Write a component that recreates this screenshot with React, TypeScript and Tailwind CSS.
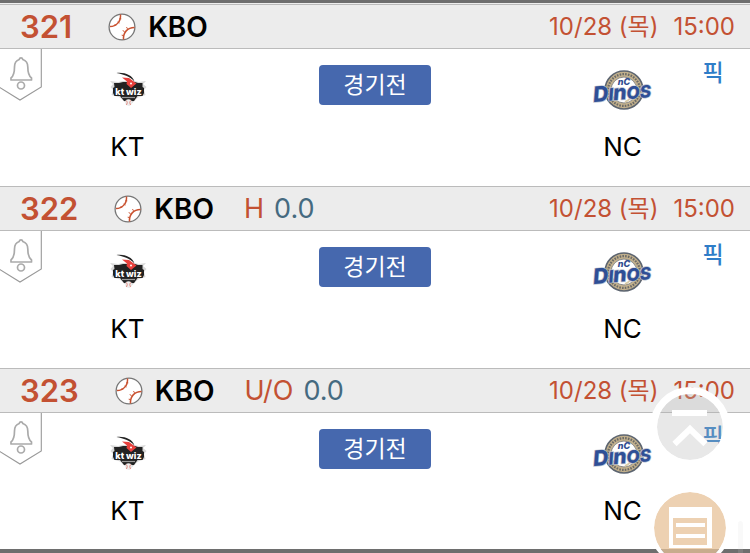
import { FC } from 'react';

interface Game {
  no: number;
  league: string;
  type?: string;
  line?: string;
  date: string;
  time: string;
  status: string;
}

const games: Game[] = [
  { no: 321, league: 'KBO', date: '10/28 (목)', time: '15:00', status: '경기전' },
  { no: 322, league: 'KBO', type: 'H', line: '0.0', date: '10/28 (목)', time: '15:00', status: '경기전' },
  { no: 323, league: 'KBO', type: 'U/O', line: '0.0', date: '10/28 (목)', time: '15:00', status: '경기전' },
];

const BaseballIcon: FC = () => (
  <svg className="w-7 h-7 shrink-0" viewBox="0 0 28 28" fill="none">
    <circle cx="14" cy="14" r="12.9" fill="#fff" stroke="#777" strokeWidth="1.3" />
    <path d="M12.5 1.5C13 8.500 8.500 13.500 2 13.500" stroke="#c9512f" strokeWidth="1.5" />
    <path d="M15.500 26.500C15 19.500 19.500 14.500 26.500 14.500" stroke="#c9512f" strokeWidth="1.5" />
    <path d="M9.500 9l2 1M6.800 11.200l1.200 1.700M11.500 5.500l1.800.3M16.500 18.500l-1.800-.9M19.500 15.800l-1-1.700M15.500 22.500l-1.800-.3" stroke="#c9512f" strokeWidth="1" />
  </svg>
);

const BellTag: FC = () => (
  <svg className="block w-[42px] h-[52px]" viewBox="0 0 42 52" fill="none" stroke="#999">
    <path d="M-1 38L20 51L41.3 38V0" strokeWidth="1.1" />
    <g stroke="#aaa" strokeWidth="1.7" strokeLinejoin="round">
      <path d="M21 8.8C19.9 8.8 19.4 9.6 19.2 10.5C16 11.5 14.5 14.5 14.5 18C14.5 24 13.5 27 11 29V31H31.5V29C29 27 27.8 24 27.8 18C27.8 14.5 26 11.5 22.8 10.5C22.6 9.6 22.1 8.8 21 8.8Z" />
      <circle cx="21" cy="36.5" r="3.5" />
    </g>
  </svg>
);

const KtLogo: FC = () => (
  <svg className="w-[38px] h-9" viewBox="0 0 38 36" role="img" aria-label="KT">
    <path d="M1 9L9 10L14 9H25L30 10L37 9L34 12L37.5 15L35 18L36.5 23L29 25.5L20 34L11 25.5L2.5 23L4 18L1.5 15L4 12Z" fill="#d8d8d8" />
    <path d="M5 11H10L14 10H26L29 11H33.5V15L35 16V21L33.5 24H28.5L25 29H15L11 24H5.500L4 21V16L5.500 15Z" fill="#222" />
    <path d="M7.5 1C16 .2 23 3 25.5 9.5C20 4 15 2.5 7.5 1Z" fill="#222" />
    <path d="M13 5.5L20 6L27.5 11.5L22 16L17.5 12L18 9.5Z" fill="#e8403c" />
    <circle cx="22" cy="11.5" r="1" fill="#fff" />
    <text x="19.5" y="22.5" textAnchor="middle" fontFamily="Inter" fontSize="9" fontWeight="800" fill="#fff">kt wiz</text>
    <path d="M13 25.5h13" stroke="#999" strokeWidth="1.2" />
    <circle cx="19.5" cy="30.5" r="3.3" fill="#eee" />
    <path d="M17.5 28.5q1.5 2 0 4.500M21.5 28.5q-1.5 2 0 4.500" stroke="#e08a80" strokeWidth="1" fill="none" />
  </svg>
);

const NcLogo: FC = () => (
  <svg className="w-[60px] h-10" viewBox="0 0 60 40" role="img" aria-label="NC">
    <circle cx="31" cy="20" r="19" fill="#c2b08c" stroke="#5d6570" strokeWidth="1.6" />
    <circle cx="31" cy="20" r="15.9" fill="none" stroke="#6a6a68" strokeWidth="2.2" strokeDasharray="1.6 1.2" />
    <circle cx="31" cy="20" r="13" fill="#fff" stroke="#8a8a88" strokeWidth="1" />
    <path d="M32 32q5-2 7-7" stroke="#d8cba8" strokeWidth="2" fill="none" />
    <text x="31" y="15" textAnchor="middle" fontFamily="Inter" fontSize="9" fontWeight="800" fontStyle="italic" fill="#2f4b8f">nC</text>
    <g transform="rotate(-5 30 23)">
      <text x="29" y="29.5" textAnchor="middle" fontFamily="Inter" fontWeight="800" fontStyle="italic" fill="#2f4f96" stroke="#bcc3cf" strokeWidth="1.4" paintOrder="stroke">
        <tspan fontSize="21">D</tspan>
        <tspan fontSize="17">I</tspan>
        <tspan fontSize="21">n</tspan>
        <tspan fontSize="17">OS</tspan>
      </text>
    </g>
  </svg>
);

const GameHeader: FC<{ game: Game }> = ({ game }) => (
  <header className="flex items-center h-[45px] pl-5 pr-[15px] bg-[#ececec] border-y border-[#bbb]">
    <span className="text-[31px] leading-8 font-semibold text-[#c35133]">{game.no}</span>
    <div className="flex items-center gap-3 ml-9">
      <BaseballIcon />
      <h2 className="text-[28px] leading-8 font-semibold">{game.league}</h2>
    </div>
    {game.type && (
      <div className="flex gap-[10px] ml-[30px] text-[27px] leading-8">
        <span className="text-[#c35133]">{game.type}</span>
        <span className="text-[#456a80]">{game.line}</span>
      </div>
    )}
    <div className="flex gap-[15px] ml-auto text-2xl text-[#c35133]">
      <span>{game.date}</span>
      <time>{game.time}</time>
    </div>
  </header>
);

const GameRow: FC<{ game: Game }> = ({ game }) => (
  <article>
    <GameHeader game={game} />
    <div className="grid grid-cols-[34%_32%_34%] h-[137px]">
      <div className="grid grid-cols-[42px_1fr_42px] items-start">
        <button type="button" aria-label="알림">
          <BellTag />
        </button>
        <div className="flex flex-col items-center pt-[19px]">
          <div className="flex items-center h-11">
            <KtLogo />
          </div>
          <p className="mt-[17px] text-[26px] leading-9">KT</p>
        </div>
      </div>
      <div className="flex justify-center items-start pt-4">
        <button type="button" className="w-28 h-10 rounded bg-[#4668ae] text-white text-[23px] leading-8">
          {game.status}
        </button>
      </div>
      <div className="grid grid-cols-[42px_1fr_42px] items-start">
        <div className="col-start-2 flex flex-col items-center pt-[19px]">
          <div className="flex items-center h-11">
            <NcLogo />
          </div>
          <p className="mt-[17px] text-[26px] leading-9">NC</p>
        </div>
        <a href="#pick" className="pt-2 -ml-8 text-[23px] leading-8 font-medium text-center text-[#2f7dc8]">픽</a>
      </div>
    </div>
  </article>
);

export default function App() {
  return (
    <main className="min-h-screen overflow-hidden bg-white text-black font-['Inter','Noto_Sans_CJK_KR',sans-serif]">
      <div className="h-1 bg-[#6e6e6e] border-b border-[#eee]" />
      {games.map((game) => (
        <GameRow key={game.no} game={game} />
      ))}
      <div className="fixed bottom-0 inset-x-0 h-1 bg-[#6e6e6e]" />
      <div className="fixed bottom-0 right-[7px] w-[5px] h-8 rounded-t bg-[#d8d8d8]/15" />
      <div className="fixed -bottom-[15px] right-5 flex flex-col gap-[21px]">
        <button type="button" aria-label="맨 위로" className="w-20 h-20 rounded-full border-[7px] border-white bg-[#b4b4b4]/30 bg-clip-padding">
          <svg className="w-full h-full" viewBox="0 0 66 66" fill="none" stroke="#fff" strokeWidth="6">
            <path d="M15 19H50M17.5 50L33 35L48.5 50" />
          </svg>
        </button>
        <button type="button" aria-label="목록" className="w-20 h-20 rounded-full border-4 border-white bg-[#e7c298]/75 bg-clip-padding">
          <svg className="w-full h-full" viewBox="0 0 72 72" fill="#fff">
            <path fillRule="evenodd" d="M15 15H58V56H15ZM19 26V53H53V26Z" />
            <path d="M22 31H51V35H22ZM22 42H51V46H22Z" />
          </svg>
        </button>
      </div>
    </main>
  );
}
